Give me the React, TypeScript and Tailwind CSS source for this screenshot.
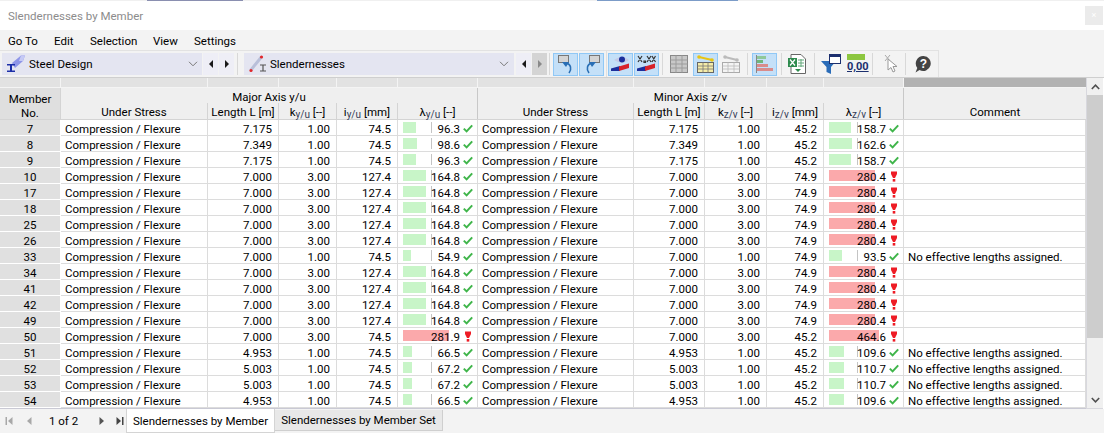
import React from 'react';

const COLS = 'grid grid-cols-[61px_147px_71px_58px_61px_80px_156px_71px_62px_57px_80px_182px]';
const CE = 'Compression / Flexure';
const NOTE = 'No effective lengths assigned.';

type Row = [string, string, string, string, string, string, string, string, string, string];

const a: (id: string) => Row = (id) => [id, '7.000', '3.00', '127.4', '164.8', '7.000', '3.00', '74.9', '280.4', ''];
const b: (id: string, l: string, ly: string, lz: string) => Row = (id, l, ly, lz) => [id, l, '1.00', '74.5', ly, l, '1.00', '45.2', lz, ''];
const c: (id: string, l: string, ly: string, lz: string) => Row = (id, l, ly, lz) => [id, l, '1.00', '74.5', ly, l, '1.00', '45.2', lz, NOTE];

const rows: Row[] = [
  b('7', '7.175', '96.3', '158.7'),
  b('8', '7.349', '98.6', '162.6'),
  b('9', '7.175', '96.3', '158.7'),
  a('10'), a('17'), a('18'), a('25'), a('26'),
  ['33', '7.000', '1.00', '74.5', '54.9', '7.000', '1.00', '74.9', '93.5', NOTE],
  a('34'), a('41'), a('42'), a('49'),
  ['50', '7.000', '3.00', '74.5', '281.9', '7.000', '3.00', '45.2', '464.6', ''],
  c('51', '4.953', '66.5', '109.6'),
  c('52', '5.003', '67.2', '110.7'),
  c('53', '5.003', '67.2', '110.7'),
  c('54', '4.953', '66.5', '109.6'),
];

function Check() {
  return (
    <svg width="10" height="9" viewBox="0 0 10 9" className="shrink-0">
      <path d="M0.8 4.6 L3.6 7.4 L9.2 1.4" fill="none" stroke="#3fb54a" strokeWidth="2" />
    </svg>
  );
}

function Bang() {
  return (
    <svg width="8" height="11" viewBox="0 0 8 11" className="shrink-0">
      <path d="M1 0.5 H7 V3 L5 7 H3 L1 3 Z" fill="#ee1c25" />
      <rect x="2.7" y="8" width="2.6" height="2.6" fill="#ee1c25" />
    </svg>
  );
}

function Ratio({ value }: { value: string }) {
  const v = parseFloat(value);
  const over = v > 200;
  const width = over ? (v > 400 ? 50 : 46) : v * 0.1385;
  return (
    <div className="relative flex items-start justify-end border-r border-b border-[#dcdcdc] pr-1 pt-px">
      <div className="absolute left-[5px] top-[2px] h-[11px] w-px bg-[#c4c4c4]" />
      <div className="absolute left-[33px] top-[2px] h-[11px] w-px bg-[#c4c4c4]" />
      <div
        className={over ? 'absolute left-[5px] top-[2px] h-[11px] bg-[#fba9ab]' : 'absolute left-[5px] top-[2px] h-[11px] bg-[#c8f5c8]'}
        style={{ width }}
      />
      <span className="relative mr-[3px]">{value}</span>
      <span className="relative flex h-[15px] w-[10px] items-center justify-center">{over ? <Bang /> : <Check />}</span>
    </div>
  );
}

function Num({ children }: { children: React.ReactNode }) {
  return <div className="border-r border-b border-[#dcdcdc] pr-[6px] pt-px text-right">{children}</div>;
}

function Text({ children }: { children: React.ReactNode }) {
  return <div className="overflow-hidden whitespace-nowrap border-r border-b border-[#dcdcdc] pl-1 pt-px">{children}</div>;
}

function HeadCell({ children, last }: { children: React.ReactNode; last?: boolean }) {
  return (
    <div className={last ? 'flex items-center justify-center whitespace-nowrap pt-[4px]' : 'flex items-center justify-center whitespace-nowrap border-r border-[#d4d4d4] pt-[4px]'}>
      {children}
    </div>
  );
}

function Sub({ base, sub, unit }: { base: string; sub: string; unit: string }) {
  return (
    <span>
      {base}
      <span className="relative top-[2px] text-[10px] text-[#333b55]">{sub}</span> {unit}
    </span>
  );
}

function Sep({ full }: { full?: boolean }) {
  return <div className={full ? 'h-[27px] w-px shrink-0 bg-[#e0e0e0]' : 'h-[22px] w-px shrink-0 bg-[#d8d8d8]'} />;
}

function Btn({ w = 24, on, children }: { w?: number; on?: boolean; children: React.ReactNode }) {
  return (
    <div
      className={on ? 'flex h-[23px] shrink-0 items-center justify-center border border-[#90c8f6] bg-[#c4e0f8]' : 'flex h-[23px] shrink-0 items-center justify-center'}
      style={{ width: w }}
    >
      {children}
    </div>
  );
}

function Arrow({ dir, off }: { dir: 'l' | 'r'; off?: boolean }) {
  return (
    <div className={off ? 'flex h-[22px] w-[15px] shrink-0 items-center justify-center bg-[#d4d4d4]' : 'flex h-[22px] w-[15px] shrink-0 items-center justify-center bg-[#eeeef6]'}>
      <svg width="6" height="8" viewBox="0 0 6 8">
        <path d={dir === 'l' ? 'M5 0 L1 4 L5 8 Z' : 'M1 0 L5 4 L1 8 Z'} fill={off ? '#8a8a8a' : '#1a1a1a'} />
      </svg>
    </div>
  );
}

function Chevron() {
  return (
    <svg width="10" height="6" viewBox="0 0 10 6">
      <path d="M1 0.8 L5 4.8 L9 0.8" fill="none" stroke="#777" strokeWidth="1" />
    </svg>
  );
}

function SteelIcon() {
  return (
    <svg width="20" height="18" viewBox="0 0 20 18">
      <path d="M6 8 L15 0.5 H19 L17 6 L9 13 Z" fill="#8f96e8" />
      <path d="M15 0.5 H19 L17 6 H13 Z" fill="#c5c9f5" />
      <path d="M1 9 H9 V10.5 H6 V15.5 H9 V17 H1 V15.5 H4 V10.5 H1 Z" fill="#1c2fa8" />
    </svg>
  );
}

function SlenderIcon() {
  return (
    <svg width="18" height="18" viewBox="0 0 18 18">
      <path d="M1.5 15.5 L12 2.5" stroke="#b9bfd9" strokeWidth="3" />
      <circle cx="2" cy="15.5" r="1.6" fill="#e0272b" />
      <circle cx="12.5" cy="2" r="1.6" fill="#e0272b" />
      <path d="M11 10 H17 M14 10 V16 M11 16 H17" stroke="#555" strokeWidth="1.2" fill="none" />
    </svg>
  );
}

function Undo({ flip }: { flip?: boolean }) {
  return (
    <svg width="18" height="21" viewBox="0 0 18 21" style={flip ? { transform: 'scaleX(-1)' } : undefined}>
      <rect x="1.5" y="1.5" width="10" height="7" fill="#d4d4d4" stroke="#777" />
      <path d="M9 9 C14 10 15 15 12 19" fill="none" stroke="#2a6fb5" strokeWidth="1.6" />
      <path d="M5 8 L12 8 L9 13 Z" fill="#2a6fb5" />
    </svg>
  );
}

function Wedge({ children }: { children: React.ReactNode }) {
  return (
    <svg width="19" height="20" viewBox="0 0 19 20">
      {children}
      <path d="M0 17 V14.5 L9 12 V17 Z" fill="#1c2f9c" />
      <path d="M8 12.5 L18 9.5 V14 L8 17 Z" fill="#d8232a" />
    </svg>
  );
}

export default function App() {
  return (
    <div className="flex h-[433px] w-[1104px] flex-col overflow-hidden bg-[#f3f3f3] font-['Roboto','Noto_Sans',sans-serif] text-[11.5px] text-black">
      {/* sliver of the window behind */}
      <div className="flex h-px bg-[#f0f0f0]">
        <div className="ml-[147px] w-[96px] bg-[#8a8fb0]" />
        <div className="ml-[354px] w-[141px] bg-[#7c9cc8]" />
      </div>

      {/* window title */}
      <div className="flex h-[30px] items-center justify-between bg-white pl-2 pr-px text-[#8c8c8c]">
        <span className="pt-[2px]">Slendernesses by Member</span>
        <div className="flex h-[19px] w-[18px] items-center justify-center bg-[#ebebeb] text-[9px] text-white">×</div>
      </div>

      {/* menu */}
      <div className="flex h-[20px] items-center pl-2 pt-[2px]">
        <span className="w-[46px]">Go To</span>
        <span className="w-[36px]">Edit</span>
        <span className="w-[63px]">Selection</span>
        <span className="w-[41px]">View</span>
        <span>Settings</span>
      </div>

      {/* toolbar */}
      <div className="flex h-[27px] w-[939px] items-center border-t border-r border-[#e2e2e2] pl-[2px]">
        <div className="flex h-[22px] w-[200px] shrink-0 items-center bg-[#e4e5f1] pl-[4px] pr-[4px]">
          <SteelIcon />
          <span className="ml-[3px] flex-1 pt-[2px]">Steel Design</span>
          <Chevron />
        </div>
        <div className="ml-px"><Arrow dir="l" /></div>
        <div className="ml-px"><Arrow dir="r" /></div>
        <div className="ml-[3px]"><Sep /></div>
        <div className="ml-[6px] flex h-[22px] w-[270px] shrink-0 items-center bg-[#e4e5f1] pl-[5px] pr-[5px]">
          <SlenderIcon />
          <span className="ml-[3px] flex-1 pt-[2px]">Slendernesses</span>
          <Chevron />
        </div>
        <div className="ml-[2px]"><Arrow dir="l" /></div>
        <div className="ml-px"><Arrow dir="r" off /></div>
        <div className="ml-[2px]"><Sep /></div>
        <div className="ml-[3px]"><Btn w={25} on><Undo /></Btn></div>
        <div className="ml-px"><Btn w={25} on><Undo flip /></Btn></div>
        <div className="ml-[2px]"><Sep full /></div>
        <div className="ml-px">
          <Btn w={25} on>
            <Wedge>
              <path d="M3 6 Q11 0 18 6 Q11 11 3 6 Z" fill="#c5cbe6" />
              <circle cx="11" cy="5.5" r="3" fill="#1c2f9c" />
            </Wedge>
          </Btn>
        </div>
        <div className="ml-px">
          <Btn w={25} on>
            <Wedge>
              <path d="M1 2 L5 8 M5 2 L1 8 M7 7 H8.5 V8.5 H7 Z M10 2 L14 8 M14 2 L10 8 M15 2 L18.5 8 M18.5 2 L15 8" stroke="#333" strokeWidth="1.2" fill="none" />
            </Wedge>
          </Btn>
        </div>
        <div className="ml-[3px]"><Sep /></div>
        <div className="ml-[7px]">
          <Btn w={18}>
            <svg width="18" height="18" viewBox="0 0 18 18">
              <rect x="0.5" y="0.5" width="17" height="17" fill="#c8c8c8" stroke="#888" />
              <path d="M0.5 5 H17.5 M0.5 9 H17.5 M0.5 13 H17.5 M6 0.5 V17.5 M12 0.5 V17.5" stroke="#9c9c9c" />
            </svg>
          </Btn>
        </div>
        <div className="ml-[5px]">
          <Btn w={25} on>
            <svg width="19" height="20" viewBox="0 0 19 20">
              <path d="M3 3 L16 6" stroke="#e8c414" strokeWidth="2" />
              <circle cx="3" cy="3" r="1.8" fill="#e8c414" />
              <circle cx="16" cy="6" r="1.8" fill="#e8c414" />
              <rect x="1.5" y="8.5" width="16" height="10" fill="#f5eca8" stroke="#666" />
              <path d="M1.5 12 H17.5 M1.5 15 H17.5 M7 8.5 V18.5 M12 8.5 V18.5" stroke="#777" strokeWidth="0.8" />
            </svg>
          </Btn>
        </div>
        <div className="ml-[4px]">
          <Btn w={18}>
            <svg width="18" height="20" viewBox="0 0 18 20">
              <path d="M3 3 L15 6" stroke="#bbb" strokeWidth="2" />
              <circle cx="3" cy="3" r="1.8" fill="#bbb" />
              <circle cx="15" cy="6" r="1.8" fill="#bbb" />
              <rect x="0.5" y="8.5" width="17" height="10" fill="#f4f4f4" stroke="#aaa" />
              <path d="M0.5 12 H17.5 M0.5 15 H17.5 M6 8.5 V18.5 M12 8.5 V18.5" stroke="#bbb" strokeWidth="0.8" />
            </svg>
          </Btn>
        </div>
        <div className="ml-[7px]"><Sep /></div>
        <div className="ml-[4px]">
          <Btn w={25} on>
            <svg width="19" height="20" viewBox="0 0 19 20">
              <path d="M1.5 1 V19" stroke="#888" />
              <rect x="2" y="2" width="9" height="3" fill="#8fc89a" />
              <rect x="2" y="6" width="6" height="3" fill="#6fb57c" />
              <rect x="2" y="10" width="11" height="3" fill="#d98b8b" />
              <rect x="2" y="14" width="16" height="3" fill="#d98b8b" />
            </svg>
          </Btn>
        </div>
        <div className="ml-[4px]"><Sep /></div>
        <div className="ml-[6px]">
          <Btn w={18}>
            <svg width="18" height="20" viewBox="0 0 18 20">
              <path d="M3 0.5 H13 L17.5 5 V19.5 H3 Z" fill="#fff" stroke="#666" />
              <rect x="0" y="4" width="9" height="9" fill="#2e8b4e" />
              <path d="M2 5.5 L7 11.5 M7 5.5 L2 11.5" stroke="#fff" strokeWidth="1.2" />
              <path d="M10 6 H16 M10 9 H16 M10 12 H16 M13 5 V13" stroke="#62a87a" />
              <path d="M7 15 H13 L10 18 Z" fill="#2e8b4e" />
            </svg>
          </Btn>
        </div>
        <div className="ml-[8px]"><Sep /></div>
        <div className="ml-[6px]">
          <Btn w={20}>
            <svg width="20" height="20" viewBox="0 0 20 20">
              <path d="M0 7 H15 L10 13 V20 L5.5 18 V13 Z" fill="#2a6cb8" />
              <rect x="8.5" y="0.5" width="11" height="9" fill="#fff" stroke="#1c2f6e" />
              <rect x="8.5" y="0.5" width="11" height="2.5" fill="#1c2f6e" />
            </svg>
          </Btn>
        </div>
        <div className="ml-[6px] flex w-[18px] shrink-0 flex-col items-stretch">
          <div className="h-[6px] bg-[#8cc63f]" />
          <span className="text-center text-[11px] font-bold leading-[14px] text-[#1c2f6e] underline">0,00</span>
        </div>
        <div className="ml-[7px]"><Sep /></div>
        <div className="ml-[11px]">
          <Btn w={14}>
            <svg width="14" height="20" viewBox="0 0 14 20">
              <path d="M1 1 L6 7 M6 1 L1 7" stroke="#aaa" />
              <path d="M4 5 L4 16 L7 13.5 L9 18 L11 17 L9 12.5 L13 12.5 Z" fill="#fff" stroke="#999" />
            </svg>
          </Btn>
        </div>
        <div className="ml-[7px]"><Sep /></div>
        <div className="ml-[8px]">
          <Btn w={18}>
            <svg width="18" height="20" viewBox="0 0 18 20">
              <path d="M9.5 2 A7.5 7.5 0 1 1 5.5 16 L1.5 18.5 L3.3 14 A7.5 7.5 0 0 1 9.5 2 Z" fill="#444" />
              <text x="9.5" y="14" fontSize="12" fontWeight="700" textAnchor="middle" fill="#fff" fontFamily="'Liberation Sans', sans-serif">?</text>
            </svg>
          </Btn>
        </div>
      </div>

      {/* table */}
      <div className="flex h-[332px] border-t border-[#cfcfcf] bg-white">
        <div className="w-[1086px] shrink-0 overflow-hidden">
          <div className={`${COLS} h-[9px] bg-[#e2e2e2]`}>
            {Array.from({ length: 11 }).map((_, i) => (
              <div key={i} className="border-r border-[#f4f4f4]" />
            ))}
            <div className="bg-[#b2b2b2]" />
          </div>
          <div className={`${COLS} h-[33px] grid-rows-[15px_16px] border-y border-y-[#d4d4d4] border-t-[#f4f4f4] bg-[#efefef]`}>
            <div className="row-span-2 flex flex-col items-center justify-center border-r border-[#d4d4d4] bg-[#dfdfdf] pt-[4px] leading-[14px]">
              <span>Member</span>
              <span>No.</span>
            </div>
            <div className="col-span-5 flex items-center justify-center border-r border-[#c8c8c8] pt-[4px]">Major Axis y/u</div>
            <div className="col-span-5 flex items-center justify-center border-r border-[#c8c8c8] pt-[4px]">Minor Axis z/v</div>
            <div />
            <HeadCell>Under Stress</HeadCell>
            <HeadCell>Length L [m]</HeadCell>
            <HeadCell><Sub base="k" sub="y/u" unit="[--]" /></HeadCell>
            <HeadCell><Sub base="i" sub="y/u" unit="[mm]" /></HeadCell>
            <div className="flex items-center justify-center whitespace-nowrap border-r border-[#c8c8c8] pt-[4px]"><Sub base="λ" sub="y/u" unit="[--]" /></div>
            <HeadCell>Under Stress</HeadCell>
            <HeadCell>Length L [m]</HeadCell>
            <HeadCell><Sub base="k" sub="z/v" unit="[--]" /></HeadCell>
            <HeadCell><Sub base="i" sub="z/v" unit="[mm]" /></HeadCell>
            <div className="flex items-center justify-center whitespace-nowrap border-r border-[#c8c8c8] pt-[4px]"><Sub base="λ" sub="z/v" unit="[--]" /></div>
            <HeadCell last>Comment</HeadCell>
          </div>
          {rows.map((r) => (
            <div key={r[0]} className={`${COLS} h-[16px] grid-rows-[16px] leading-[17px]`}>
              <div className="border-r border-b border-white bg-[#e0e0e0] pt-px text-center">{r[0]}</div>
              <Text>{CE}</Text>
              <Num>{r[1]}</Num>
              <Num>{r[2]}</Num>
              <Num>{r[3]}</Num>
              <Ratio value={r[4]} />
              <Text>{CE}</Text>
              <Num>{r[5]}</Num>
              <Num>{r[6]}</Num>
              <Num>{r[7]}</Num>
              <Ratio value={r[8]} />
              <Text>{r[9]}</Text>
            </div>
          ))}
          <div className="h-[1px] bg-[#c9c9d4]" />
        </div>

        {/* scrollbar */}
        <div className="flex h-[331px] w-[17px] shrink-0 flex-col border-b border-l border-[#d8d8de] bg-[#f0f0f0]">
          <div className="flex h-[17px] items-center justify-center">
            <svg width="9" height="6" viewBox="0 0 9 6"><path d="M0.8 5 L4.5 1.2 L8.2 5" fill="none" stroke="#505050" strokeWidth="1.6" /></svg>
          </div>
          <div className="h-[243px] bg-[#cdcdcd]" />
          <div className="flex-1" />
          <div className="flex h-[17px] items-center justify-center">
            <svg width="9" height="6" viewBox="0 0 9 6"><path d="M0.8 1 L4.5 4.8 L8.2 1" fill="none" stroke="#505050" strokeWidth="1.6" /></svg>
          </div>
        </div>
      </div>

      {/* sheet tabs */}
      <div className="flex flex-1 items-start">
        <div className="flex h-[24px] w-[126px] shrink-0 items-center">
          <svg width="8" height="8" viewBox="0 0 8 8" className="ml-[5px]"><path d="M0.5 0 H2 V8 H0.5 Z M7.5 0 V8 L3 4 Z" fill="#a8a8a8" /></svg>
          <svg width="6" height="8" viewBox="0 0 6 8" className="ml-[13px]"><path d="M5.5 0 V8 L1 4 Z" fill="#a8a8a8" /></svg>
          <span className="ml-[17px] w-[50px] whitespace-nowrap pt-[2px]">1 of 2</span>
          <svg width="6" height="8" viewBox="0 0 6 8"><path d="M0.5 0 V8 L5 4 Z" fill="#555" /></svg>
          <svg width="8" height="8" viewBox="0 0 8 8" className="ml-[11px]"><path d="M0.5 0 V8 L5 4 Z M6 0 H7.5 V8 H6 Z" fill="#444" /></svg>
        </div>
        <div className="flex h-[24px] w-[149px] shrink-0 items-center justify-center whitespace-nowrap border-x border-b border-[#d4d4d4] bg-white pt-[2px]">Slendernesses by Member</div>
        <div className="mt-[1px] flex h-[21px] w-[168px] shrink-0 items-center justify-center whitespace-nowrap border-r border-b border-[#cfcfcf] bg-[#e8e8e8] pt-[2px]">Slendernesses by Member Set</div>
      </div>
    </div>
  );
}
